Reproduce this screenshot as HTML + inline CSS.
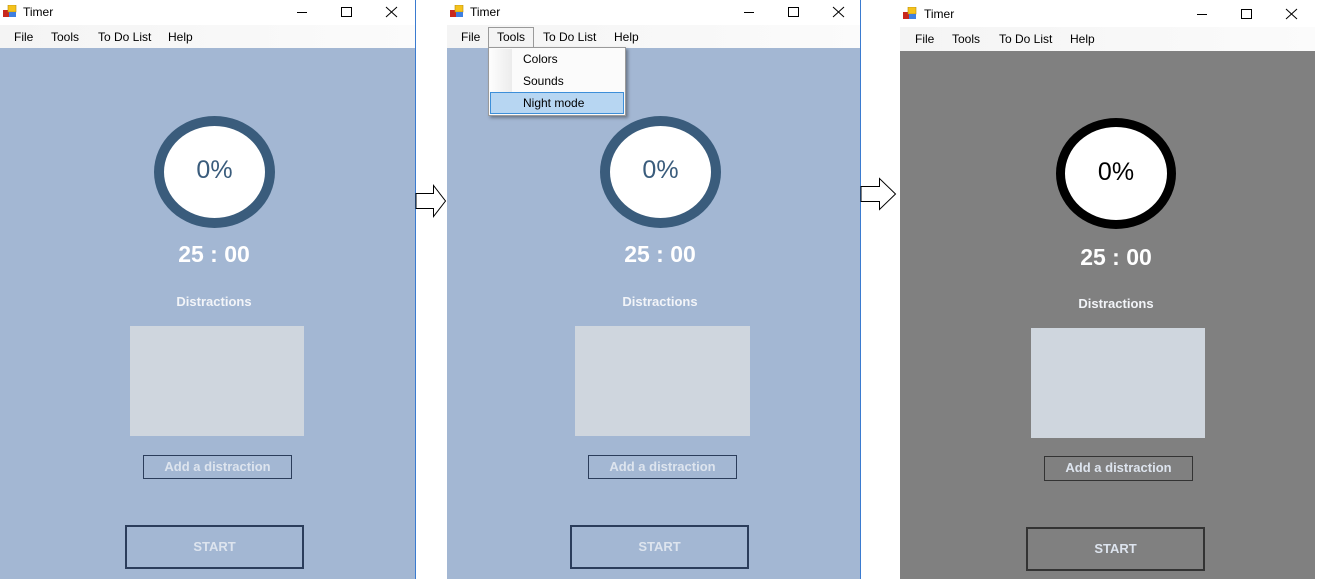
<!DOCTYPE html>
<html><head><meta charset="utf-8"><style>
*{margin:0;padding:0;box-sizing:border-box}
body{width:1317px;height:579px;background:#fff;position:relative;overflow:hidden;font-family:"Liberation Sans",sans-serif}
.win{position:absolute;top:0;width:415px;height:579px;overflow:hidden}
.title{position:absolute;left:0;top:0;width:100%;height:25px;background:#fff}
.title .t{position:absolute;left:23px;top:5px;font-size:12px;color:#000}
.icon{position:absolute;left:3px;top:5px;width:14px;height:13px}
.menu{position:absolute;left:0;top:25px;width:100%;height:23px;background:linear-gradient(90deg,#f4f4f4,#fbfbfb)}
.menu span{position:absolute;top:5px;font-size:12px;color:#000}
.content{position:absolute;left:0;top:48px;width:100%;height:531px}
.ring{position:absolute;left:154px;top:68px;width:121px;height:112px;border-radius:50%;border:10px solid #3a5c7c;background:#fff;display:flex;align-items:center;justify-content:center;font-size:25px;color:#3a5c7c;padding-bottom:3px}
.timer{position:absolute;left:14px;width:400px;text-align:center;top:193px;font-size:23px;font-weight:bold;color:#fff}
.dis{position:absolute;left:14px;width:400px;text-align:center;top:246px;font-size:13px;font-weight:bold;color:#f2f4f8}
.box{position:absolute;left:130px;top:278px;width:174px;height:110px;background:#cfd6de}
.add{position:absolute;left:143px;top:407px;width:149px;height:24px;border:1px solid #2b3d5b;color:#dde4ee;font-size:13px;font-weight:bold;text-align:center;line-height:22px}
.start{position:absolute;left:125px;top:477px;width:179px;height:44px;border:2px solid #2b3d5b;color:#dde4ee;font-size:13px;font-weight:bold;text-align:center;line-height:40px}
.ctl{position:absolute;top:0}
.night .content{background:#808080}
.night .ring{border-color:#000;color:#000}
.night .add,.night .start{border-color:#333}
.blue .content{background:#a3b7d3}
</style></head><body>

<div class="win blue" style="left:0">
 <div class="title"><svg class="icon" viewBox="0 0 14 13"><rect x="0" y="5" width="6" height="7" fill="#c8281e"/><rect x="5" y="0" width="8" height="7" fill="#f5c21b" stroke="#b58a10" stroke-width=".6"/><rect x="6" y="7" width="7" height="5" fill="#3f7fe0"/></svg><span class="t">Timer</span>
  <svg class="ctl" style="left:290px" width="125" height="25"><line x1="7" y1="12.5" x2="17" y2="12.5" stroke="#000"/><rect x="51.5" y="7.5" width="10" height="9" fill="none" stroke="#000"/><path d="M96 7L107 17M107 7L96 17" stroke="#000"/></svg></div>
 <div class="menu"><span style="left:14px">File</span><span style="left:51px">Tools</span><span style="left:98px">To Do List</span><span style="left:168px">Help</span></div>
 <div class="content"><div class="ring">0%</div><div class="timer">25 : 00</div><div class="dis">Distractions</div><div class="box"></div><div class="add">Add a distraction</div><div class="start">START</div></div>
</div>
<div style="position:absolute;left:415px;top:0;width:1px;height:579px;background:#3a7bd0"></div>

<svg style="position:absolute;left:415px;top:184px" width="32" height="34"><path d="M1 9.5H18.5V1.5L30.5 17L18.5 32.5V24.5H1Z" fill="#fff" stroke="#000"/></svg>

<div class="win blue" style="left:447px;width:413px">
 <div class="title"><svg class="icon" viewBox="0 0 14 13"><rect x="0" y="5" width="6" height="7" fill="#c8281e"/><rect x="5" y="0" width="8" height="7" fill="#f5c21b" stroke="#b58a10" stroke-width=".6"/><rect x="6" y="7" width="7" height="5" fill="#3f7fe0"/></svg><span class="t">Timer</span>
  <svg class="ctl" style="left:290px" width="125" height="25"><line x1="7" y1="12.5" x2="17" y2="12.5" stroke="#000"/><rect x="51.5" y="7.5" width="10" height="9" fill="none" stroke="#000"/><path d="M96 7L107 17M107 7L96 17" stroke="#000"/></svg></div>
 <div class="menu"><span style="left:14px">File</span><span style="left:41px;top:2px;width:46px;height:21px;border:1px solid #9a9a9a;border-bottom:none;background:#f4f4f4;text-align:center;padding-top:2px">Tools</span><span style="left:96px">To Do List</span><span style="left:167px">Help</span></div>
 <div class="content"><div class="ring" style="left:153px">0%</div><div class="timer" style="left:13px">25 : 00</div><div class="dis" style="left:13px">Distractions</div><div class="box" style="left:128px;width:175px"></div><div class="add" style="left:141px">Add a distraction</div><div class="start" style="left:123px">START</div></div>
 <div style="position:absolute;left:41px;top:47px;width:138px;height:69px;background:#fbfbfb;border:1px solid #9a9a9a;box-shadow:2px 2px 3px rgba(0,0,0,.35)">
  <div style="position:absolute;left:1px;top:1px;width:22px;height:44px;background:linear-gradient(90deg,#fdfdfd,#ececec)"></div>
  <div style="position:absolute;left:34px;top:4px;font-size:12px">Colors</div>
  <div style="position:absolute;left:34px;top:26px;font-size:12px">Sounds</div>
  <div style="position:absolute;left:1px;top:44px;width:134px;height:22px;background:#b7d6f2;border:1px solid #3d8fd9"></div>
  <div style="position:absolute;left:34px;top:48px;font-size:12px">Night mode</div>
 </div>
</div>
<div style="position:absolute;left:860px;top:0;width:1px;height:579px;background:#3a7bd0"></div>

<svg style="position:absolute;left:860px;top:177px" width="37" height="34"><path d="M1 9.5H19.5V1.5L35.5 17L19.5 32.5V24.5H1Z" fill="#fff" stroke="#000"/></svg>

<div class="win night" style="left:900px">
 <div class="title" style="height:27px"><svg class="icon" style="top:7px" viewBox="0 0 14 13"><rect x="0" y="5" width="6" height="7" fill="#c8281e"/><rect x="5" y="0" width="8" height="7" fill="#f5c21b" stroke="#b58a10" stroke-width=".6"/><rect x="6" y="7" width="7" height="5" fill="#3f7fe0"/></svg><span class="t" style="left:24px;top:7px">Timer</span>
  <svg class="ctl" style="left:290px;top:2px" width="125" height="25"><line x1="7" y1="12.5" x2="17" y2="12.5" stroke="#000"/><rect x="51.5" y="7.5" width="10" height="9" fill="none" stroke="#000"/><path d="M96 7L107 17M107 7L96 17" stroke="#000"/></svg></div>
 <div class="menu" style="top:27px;height:24px"><span style="left:15px">File</span><span style="left:52px">Tools</span><span style="left:99px">To Do List</span><span style="left:170px">Help</span></div>
 <div class="content" style="top:51px;height:528px"><div class="ring" style="left:156px;top:67px;width:120px;height:111px;border-width:9px">0%</div><div class="timer" style="left:16px;top:193px">25 : 00</div><div class="dis" style="left:16px;top:245px">Distractions</div><div class="box" style="left:131px;top:277px"></div><div class="add" style="left:144px;top:405px;width:149px;height:25px">Add a distraction</div><div class="start" style="left:126px;top:476px">START</div></div>
</div>
</body></html>
